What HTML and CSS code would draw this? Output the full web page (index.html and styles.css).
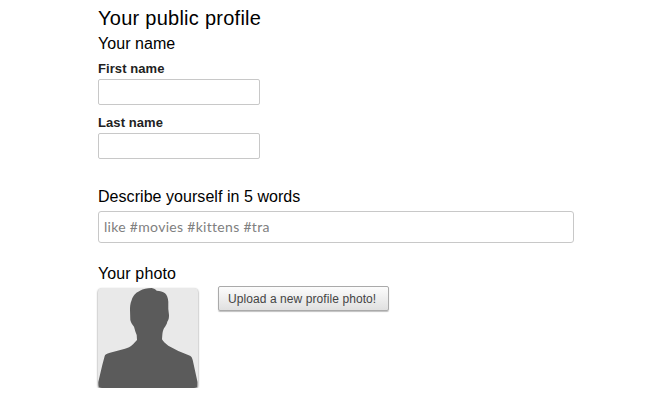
FILE: index.html
```html
<!DOCTYPE html>
<html lang="en">
<head>
<meta charset="utf-8">
<title>Your public profile</title>
<link rel="stylesheet" href="styles.css">
</head>
<body>
<form class="profile">
  <h1 class="title">Your public profile</h1>
  <h2 class="heading">Your name</h2>
  <label class="label first" for="first">First name</label>
  <input class="field" id="first" type="text">
  <label class="label last" for="last">Last name</label>
  <input class="field" id="last" type="text">
  <h2 class="heading describe">Describe yourself in 5 words</h2>
  <input class="field tags" type="text" placeholder="like #movies #kittens #tra">
  <h2 class="heading photo-heading">Your photo</h2>
  <div class="photo-row">
    <div class="avatar">
      <svg width="100" height="100" viewBox="0 0 100 100"><path fill="#5b5b5b" d="M53.7 0C49 0 45 .8 42 2.7C37 5 35 8 33.7 12C32 16 32 19 32 22L32.3 32C33 35 34.5 37 36 38.7C37 42 37.8 45 38.7 47L39 52L35.3 56C32 59 30 60 27 60.7L12 64.7C8.500 65.500 7 66.500 6.700 68L4.300 77L.3 94V100H99.500V94L94.700 72C94 69.500 93.500 68.500 92 67.700L80.300 63L70.300 57.700C67.500 55.500 65 53.500 64 51.300L64.300 47C64.500 44 65.300 42 66 40.300C67.500 38 69 36 69.300 33.700C71 31.500 71 29 71 27L70.300 21V13.700C70 10 69 7 67 5.300C65 3.500 62 3 58.700 2.700C57.500 1.500 56 .5 53.700 0Z"/></svg>
    </div>
    <button class="upload" type="button">Upload a new profile photo!</button>
  </div>
</form>
</body>
</html>
```
FILE: styles.css
```css
* { box-sizing: border-box; }
body { margin: 0; background: #fff; color: #000; font-family: "Liberation Sans", Arial, sans-serif; }
.profile { width: 476px; margin-left: 98px; padding-top: 6px; }
.title { margin: 0; font-size: 20px; line-height: 24px; font-weight: 400; letter-spacing: 0.26px; }
.heading { margin: 4px 0 0; font-size: 16px; line-height: 20px; font-weight: 400; letter-spacing: 0.05px; }
.label { display: block; font-size: 13px; line-height: 16px; font-weight: 700; letter-spacing: 0.08px; color: #222; }
.first { margin: 7px 0 2px; }
.last { margin: 10px 0 2px; }
.field { display: block; width: 162px; height: 26px; margin: 0; padding: 0 5px; border: 1px solid #c8c8c8; border-radius: 2px; background: #fff; }
.describe { margin-top: 28px; }
.tags { width: 476px; height: 32px; margin-top: 4px; padding-bottom: 2px; border-radius: 3px; font-family: Lato, sans-serif; font-size: 14px; letter-spacing: 0.3px; }
.tags::placeholder { color: #808080; opacity: 1; }
.photo-heading { margin-top: 21px; letter-spacing: 0.12px; }
.photo-row { display: flex; align-items: flex-start; gap: 20px; margin-top: 1px; }
.avatar { width: 100px; height: 100px; margin-top: 3px; overflow: hidden; border-radius: 4px; background: #e9e9e9; box-shadow: 0 1px 2px rgba(0,0,0,.6); }
.avatar svg { display: block; }
.upload { width: 171px; height: 25px; margin: 1px 0 0; padding: 1px 0 0 9px; border: 1px solid #aaa; border-radius: 2px; background: linear-gradient(#fcfcfc, #e0e0e0); box-shadow: 0 1px 1px rgba(0,0,0,.25); color: #444; font: 12px "Liberation Sans", Arial, sans-serif; letter-spacing: 0.08px; text-align: left; white-space: nowrap; }
```
